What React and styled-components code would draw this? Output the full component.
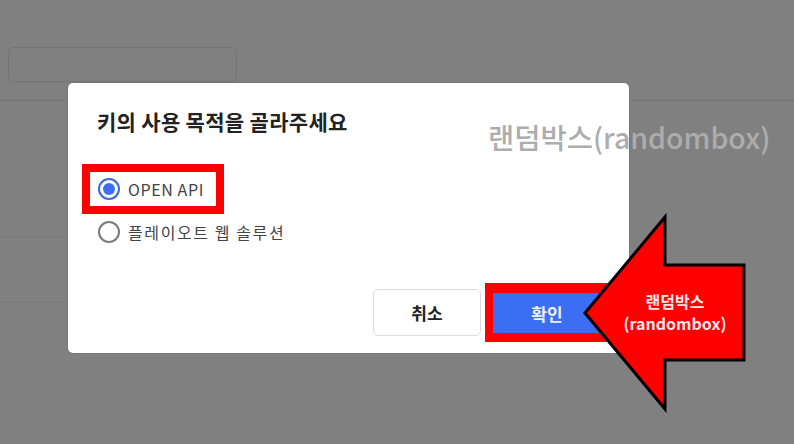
import styled, { createGlobalStyle } from 'styled-components'

const GlobalStyle = createGlobalStyle`
  html, body {
    margin: 0;
    padding: 0;
    background: #808080;
    overflow: hidden;
  }
  * {
    box-sizing: border-box;
  }
`

const font = `"Noto Sans CJK KR", "Noto Sans", sans-serif`

export default function App() {
  return (
    <>
      <GlobalStyle />
      <Page>
        <Toolbar>
          <SearchBox />
        </Toolbar>
        <List>
          <Row $height={137} />
          <Row $height={65} />
        </List>

        <Modal>
          <Title>키의 사용 목적을 골라주세요</Title>

          <Options>
            <Highlight>
              <Option>
                <Radio $checked />
                <OptionLabel $spacing={0.6}>OPEN API</OptionLabel>
              </Option>
            </Highlight>
            <Option $indent>
              <Radio />
              <OptionLabel $spacing={1.6}>플레이오트 웹 솔루션</OptionLabel>
            </Option>
          </Options>

          <Footer>
            <CancelButton>취소</CancelButton>
            <ConfirmFrame>
              <ConfirmButton>확인</ConfirmButton>
            </ConfirmFrame>
          </Footer>
        </Modal>

        <Watermark>랜덤박스(randombox)</Watermark>

        <Arrow width="170" height="202" viewBox="0 0 170 202">
          <polygon
            points="4,100 84,4 84,52 163,52 163,147 84,147 84,196"
            fill="#ff0000"
            stroke="#000"
            strokeWidth="3"
            strokeLinejoin="miter"
          />
        </Arrow>
        <ArrowLabel>
          <LabelLine>랜덤박스</LabelLine>
          <LabelLine>(randombox)</LabelLine>
        </ArrowLabel>
      </Page>
    </>
  )
}

const Page = styled.div`
  position: relative;
  width: 794px;
  height: 444px;
  overflow: hidden;
  background: #808080;
  font-family: ${font};
`

const Toolbar = styled.div`
  height: 101px;
  padding: 47px 0 0 8px;
  border-bottom: 1px solid #767676;
`

const SearchBox = styled.div`
  width: 229px;
  height: 35px;
  border: 1px solid #747474;
  border-radius: 5px;
`

const List = styled.div`
  width: 300px;
`

const Row = styled.div`
  height: ${(p) => p.$height}px;
  border-bottom: 1px solid #7a7a7a;
`

const Modal = styled.div`
  position: absolute;
  left: 68px;
  top: 83px;
  width: 561px;
  height: 270px;
  display: flex;
  flex-direction: column;
  padding: 24px 20px 11px 29px;
  background: #fff;
  border-radius: 5px;
  box-shadow: 0 0 0 1px rgba(0, 0, 0, 0.06);
`

const Title = styled.h2`
  margin: 0;
  font-size: 21px;
  line-height: 29px;
  font-weight: 700;
  color: #222;
  letter-spacing: 0.3px;
`

const Options = styled.div`
  display: flex;
  flex-direction: column;
  align-items: flex-start;
  gap: 6px;
  margin-top: 28px;
`

const Highlight = styled.div`
  display: inline-flex;
  margin-left: -15px;
  padding: 5px 12px 5px 8px;
  border: 8px solid #ff0000;
`

const Option = styled.label`
  display: flex;
  align-items: center;
  gap: 8px;
  height: 24px;
  margin-left: ${(p) => (p.$indent ? '1px' : '0')};
`

const Radio = styled.span`
  position: relative;
  width: 22px;
  height: 22px;
  border-radius: 50%;
  border: 2px solid ${(p) => (p.$checked ? '#3b68d9' : '#7a7a7a')};
  background: #fff;

  &::after {
    content: '';
    display: ${(p) => (p.$checked ? 'block' : 'none')};
    position: absolute;
    left: 3px;
    top: 3px;
    width: 12px;
    height: 12px;
    border-radius: 50%;
    background: #3d6ff2;
  }
`

const OptionLabel = styled.span`
  font-size: 16px;
  line-height: 24px;
  color: #444;
  letter-spacing: ${(p) => p.$spacing}px;
`

const Footer = styled.div`
  display: flex;
  justify-content: flex-end;
  align-items: center;
  gap: 4px;
  margin-top: auto;
`

const CancelButton = styled.button`
  width: 108px;
  height: 47px;
  border: 1px solid #dcdcdc;
  border-radius: 5px;
  background: #fff;
  font-family: ${font};
  font-size: 17px;
  font-weight: 700;
  color: #222;
  margin-bottom: 1px;
`

const ConfirmFrame = styled.div`
  border-style: solid;
  border-color: #ff0000;
  border-width: 10px 8px 9px 8px;
`

const ConfirmButton = styled.button`
  display: block;
  width: 108px;
  height: 40px;
  border: 0;
  background: #3c6ef4;
  font-family: ${font};
  font-size: 17px;
  font-weight: 700;
  color: #eef2fd;
`

const Watermark = styled.div`
  position: absolute;
  left: 488px;
  top: 119px;
  font-size: 28.5px;
  line-height: 36px;
  font-weight: 500;
  color: #adadad;
  white-space: nowrap;
`

const Arrow = styled.svg`
  position: absolute;
  left: 581px;
  top: 213px;
  overflow: visible;
`

const ArrowLabel = styled.div`
  position: absolute;
  left: 615px;
  top: 290px;
  width: 120px;
  display: flex;
  flex-direction: column;
  align-items: center;
  font-size: 16px;
  font-weight: 700;
  color: #f4e6e6;
`

const LabelLine = styled.span`
  display: block;
  line-height: 22px;
  white-space: nowrap;
`
